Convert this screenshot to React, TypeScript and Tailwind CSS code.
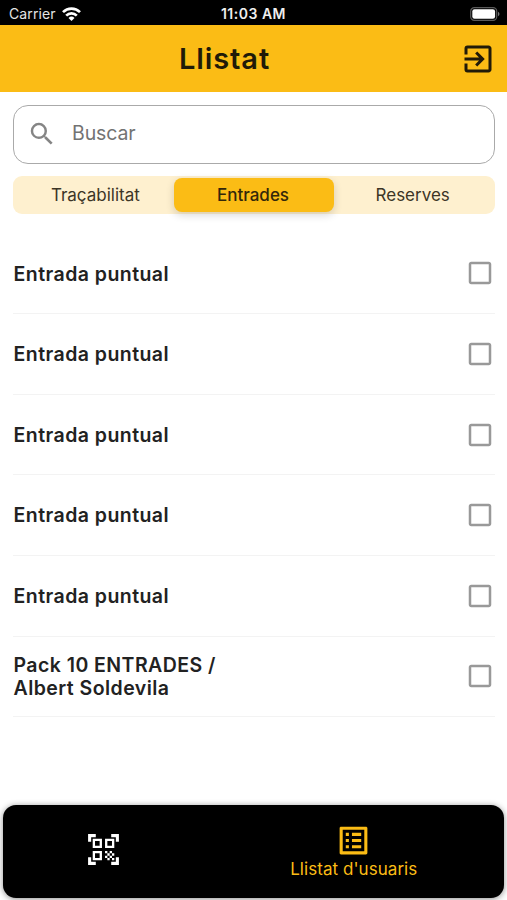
import React from "react";
import {
  MdCheckBoxOutlineBlank,
  MdExitToApp,
  MdOutlineListAlt,
  MdQrCodeScanner,
  MdSearch,
} from "react-icons/md";

const entries: string[][] = [
  ["Entrada puntual"],
  ["Entrada puntual"],
  ["Entrada puntual"],
  ["Entrada puntual"],
  ["Entrada puntual"],
  ["Pack 10 ENTRADES /", "Albert Soldevila"],
];

function StatusBar() {
  return (
    <div className="grid h-[25px] shrink-0 grid-cols-3 items-center bg-black pl-[9px] pr-[7px] pt-[2px] text-white">
      <div className="flex items-center gap-[6px]">
        <span className="text-[14px] leading-none tracking-[0.1px] text-[#e4e4e4]">Carrier</span>
        <svg width="19" height="14" viewBox="0 0 19 14" fill="none" stroke="white" strokeWidth="2.7">
          <path d="M1 5.1a12.2 12.2 0 0 1 17 0" />
          <path d="M4.2 8.6a7.6 7.6 0 0 1 10.6 0" />
          <path d="M9.5 14l-3-3.1a4.3 4.3 0 0 1 6 0z" fill="white" stroke="none" />
        </svg>
      </div>
      <span className="pr-[2px] text-center text-[14px] font-semibold leading-none tracking-[0.5px] text-[#eee]">11:03 AM</span>
      <svg className="justify-self-end" width="30" height="14" viewBox="0 0 30 14">
        <rect x="0.7" y="0.7" width="26" height="12.6" rx="3.6" fill="none" stroke="#5a5a5a" strokeWidth="1.2" />
        <rect x="2.3" y="2.3" width="22.8" height="9.4" rx="2.2" fill="white" />
        <path d="M28 4.8v4.4q1.5-.7 1.5-2.2T28 4.8z" fill="#777" />
      </svg>
    </div>
  );
}

export default function App() {
  return (
    <div className="flex h-[900px] w-[507px] flex-col overflow-hidden bg-white font-['Inter','Liberation_Sans',sans-serif] text-[#222]">
      <StatusBar />
      <header className="grid h-[67px] shrink-0 grid-cols-[48px_1fr_48px] items-center bg-[#fbbc15] text-[#211a08]">
        <h1 className="col-start-2 -mr-px pb-px pr-[59px] text-center text-[29px] font-semibold leading-none tracking-[0.9px]">Llistat</h1>
        <MdExitToApp className="ml-[0.5px] size-9" />
      </header>

      <main className="flex flex-1 flex-col pl-[13px] pr-3">
        <div className="mt-[13px] flex h-[58.5px] items-center rounded-[15px] border-[1.5px] border-[#aaa] pl-[13px]">
          <MdSearch className="size-[30px] text-[#858585]" />
          <span className="ml-[15px] pb-px text-[19.5px] leading-none tracking-[-0.1px] text-[#737373]">Buscar</span>
        </div>

        <div className="mt-[12.5px] grid h-[38px] grid-cols-3 items-center rounded-[9px] bg-[#fef0cf] text-center text-[17px] leading-none text-[#3c3526]">
          <span className="pl-1 pt-px">Traçabilitat</span>
          <span className="flex h-[34px] items-center justify-center rounded-[8px] bg-[#fbbc15] pr-[2px] pt-px font-medium text-[#33270a] shadow-[0_3px_8px_rgba(0,0,0,0.16)]">Entrades</span>
          <span className="pr-1 pt-px">Reserves</span>
        </div>

        <ul className="mt-[19.6px]">
          {entries.map((lines, i) => (
            <li key={i} className="flex h-[80.6px] items-center justify-between border-b border-[#f3f3f3]">
              <div className="pl-[0.5px] pt-[1.5px] text-[19.5px] font-semibold leading-[23px] tracking-[0.45px]">
                {lines.map((line) => (
                  <div key={line}>{line}</div>
                ))}
              </div>
              <MdCheckBoxOutlineBlank className="size-[30px] text-[#999]" />
            </li>
          ))}
        </ul>
      </main>

      <nav className="mx-[3px] mb-[2.5px] grid h-[92.5px] shrink-0 grid-cols-2 rounded-[13px] bg-black shadow-[0_1px_6px_rgba(0,0,0,0.45)]">
        <div className="flex items-center justify-center pr-[50px]">
          <MdQrCodeScanner className="mb-[3px] size-[37px] text-white" />
        </div>
        <div className="flex flex-col items-center pr-[50px] pt-[17px] text-[#fbbc15]">
          <MdOutlineListAlt className="size-[37px]" />
          <span className="mt-[2px] text-[17px] leading-[17px] tracking-[0.05px]">Llistat d'usuaris</span>
        </div>
      </nav>
    </div>
  );
}
